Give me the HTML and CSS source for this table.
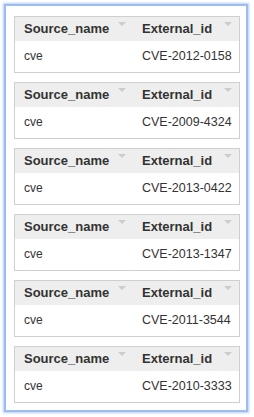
FILE: index.html
```html
<!DOCTYPE html>
<html lang="en">
<head>
<meta charset="UTF-8">
<meta name="viewport" content="width=device-width, initial-scale=1.0">
<title>External ids</title>

<link rel="stylesheet" href="styles.css">
</head>

<body>

<div class="frame">

  <div class="tbl">
    <div class="th">Source_name<span class="sort"></span></div>
    <div class="th">External_id<span class="sort"></span></div>
    <div class="td">cve</div>
    <div class="td id">CVE-2012-0158</div>
  </div>

  <div class="tbl">
    <div class="th">Source_name<span class="sort"></span></div>
    <div class="th">External_id<span class="sort"></span></div>
    <div class="td">cve</div>
    <div class="td id">CVE-2009-4324</div>
  </div>

  <div class="tbl">
    <div class="th">Source_name<span class="sort"></span></div>
    <div class="th">External_id<span class="sort"></span></div>
    <div class="td">cve</div>
    <div class="td id">CVE-2013-0422</div>
  </div>

  <div class="tbl">
    <div class="th">Source_name<span class="sort"></span></div>
    <div class="th">External_id<span class="sort"></span></div>
    <div class="td">cve</div>
    <div class="td id">CVE-2013-1347</div>
  </div>

  <div class="tbl">
    <div class="th">Source_name<span class="sort"></span></div>
    <div class="th">External_id<span class="sort"></span></div>
    <div class="td">cve</div>
    <div class="td id">CVE-2011-3544</div>
  </div>

  <div class="tbl">
    <div class="th">Source_name<span class="sort"></span></div>
    <div class="th">External_id<span class="sort"></span></div>
    <div class="td">cve</div>
    <div class="td id">CVE-2010-3333</div>
  </div>

</div>

</body>
</html>
```

FILE: styles.css
```css
body {
  margin: 0;
  font-family: "Liberation Sans", Arial, sans-serif;
  background: white;
}

.frame {
  margin: 4px;
  width: 244px;
  height: 408px;
  box-sizing: border-box;
  border: 2px solid #9dbcf4;
  box-shadow: 0 0 2px 1px #b4cdf7;
  padding: 10px 6px 0 8px;
  display: flex;
  flex-direction: column;
  gap: 9px;
}

.tbl {
  display: grid;
  grid-template-columns: 117px 1fr;
  grid-template-rows: 24px 31px;
  border: 1px solid #cfcfcf;
}

.th {
  position: relative;
  background: #eeeeee;
  font-weight: bold;
  font-size: 13px;
  color: #333;
  padding-left: 9px;
  line-height: 24px;
}

.th:nth-child(2) {
  padding-left: 10px;
}

/* little grey sort triangle in the header corner */
.sort {
  position: absolute;
  top: 5px;
  right: 6px;
  width: 0;
  height: 0;
  border-left: 4px solid transparent;
  border-right: 4px solid transparent;
  border-top: 4px solid #cccccc;
}

.th:nth-child(2) .sort {
  right: 7px;
}

.td {
  font-size: 12px;
  color: #333;
  padding-left: 9px;
  line-height: 31px;
}

.td.id {
  font-size: 12.5px;
  padding-left: 10px;
}
```
